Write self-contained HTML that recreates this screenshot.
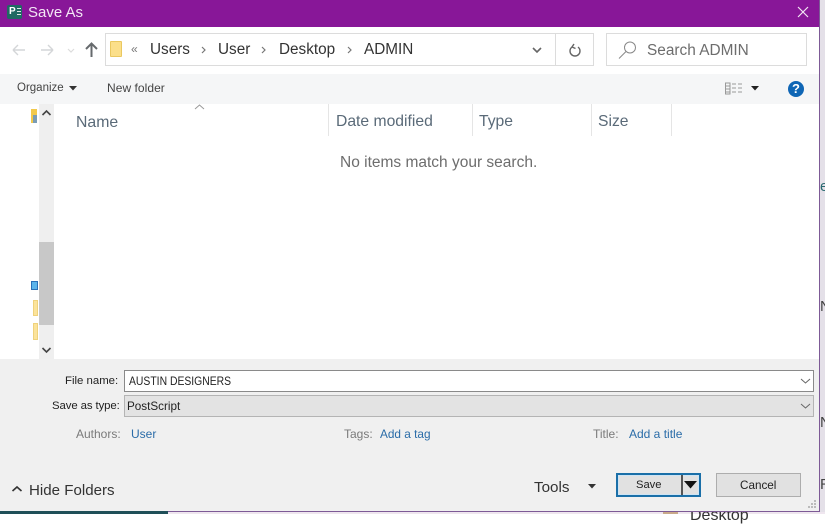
<!DOCTYPE html>
<html><head><meta charset="utf-8"><style>
html,body{margin:0;padding:0}
body{width:825px;height:514px;overflow:hidden;position:relative;background:#fff;font-family:"Liberation Sans",sans-serif}
.a,.t,svg{position:absolute}
.t{white-space:nowrap;line-height:1}
</style></head><body>
<div class="a" style="left:820px;top:0;width:5px;height:514px;background:#e4e0e8"></div>
<div class="t" style="left:820px;top:179px;font-size:15px;color:#2a6a70">e</div>
<div class="t" style="left:820px;top:299px;font-size:15px;color:#444">N</div>
<div class="t" style="left:820px;top:415px;font-size:15px;color:#444">N</div>
<div class="t" style="left:820px;top:477px;font-size:15px;color:#444">R</div>
<div class="a" style="left:0;top:512px;width:825px;height:2px;background:#efe6ef"></div>
<div class="a" style="left:663px;top:511px;width:15px;height:3px;background:#c9a98a"></div>
<div class="t" style="left:690px;top:508px;font-size:16px;color:#333">Desktop</div>
<!-- dialog -->
<div class="a" style="left:0;top:0;width:819px;height:511px;background:#fff;border-right:1px solid #7d5a96;border-bottom:1px solid #7d5a96;overflow:hidden">
<div class="a" style="left:0;top:0;width:819px;height:27px;background:#881798"></div>
<div class="a" style="left:7px;top:5px;width:15px;height:14px;background:#1f6a63;border-radius:2px"></div>
<div class="t" style="left:9px;top:7px;font-size:10px;font-weight:bold;color:#fff">P</div>
<svg style="left:16px;top:7px" width="6" height="10" fill="none" stroke="#dbe9e7"><path d="M1 1.500H5M1 4.500H5M1 7.500H5"/></svg>
<div class="t" style="left:28px;top:5px;font-size:15px;color:#f3e6f5">Save As</div>
<svg style="left:796px;top:5px" width="14" height="14"><path d="M2 2L12 12M12 2L2 12" stroke="#f2e6f4" stroke-width="1.2" fill="none"/></svg>
<!-- nav -->
<svg style="left:10px;top:42px" width="70" height="16" fill="none"><path d="M3 8H15M3 8L8 3M3 8L8 13" stroke="#d4d6d8" stroke-width="1.4"/><path d="M43 8H31M43 8L38 3M43 8L38 13" stroke="#d4d6d8" stroke-width="1.4"/><path d="M58 7L61 10L64 7" stroke="#dcdcdc" stroke-width="1.2"/></svg>
<svg style="left:84px;top:41px" width="15" height="17" fill="none"><path d="M7.500 16V3M2 8L7.500 2.500L13 8" stroke="#666a6d" stroke-width="2"/></svg>
<div class="a" style="left:105px;top:33px;width:489px;height:33px;box-sizing:border-box;border:1px solid #dcdcdc"></div>
<div class="a" style="left:555px;top:33px;width:1px;height:33px;background:#dcdcdc"></div>
<div class="a" style="left:110px;top:41px;width:12px;height:16px;background:#fbdf8a;border:1px solid #eac860;box-sizing:border-box;border-radius:1px"></div>
<div class="t" style="left:131px;top:43px;font-size:12px;color:#777">«</div>
<div class="t" style="left:150px;top:42px;font-size:15.3px;color:#333">Users</div>
<div class="t" style="left:218px;top:42px;font-size:15.3px;color:#333">User</div>
<div class="t" style="left:279px;top:42px;font-size:15.3px;color:#333">Desktop</div>
<div class="t" style="left:364px;top:42px;font-size:15.3px;color:#333">ADMIN</div>
<svg style="left:196px;top:44px" width="170" height="12" fill="none" stroke="#777" stroke-width="1.2"><path d="M6 3L9 6L6 9M66 3L69 6L66 9M152 3L155 6L152 9"/></svg>
<svg style="left:531px;top:45px" width="12" height="10" fill="none"><path d="M2 3L6 7L10 3" stroke="#666" stroke-width="1.6"/></svg>
<svg style="left:568px;top:42px" width="14" height="16" fill="none"><path d="M4 5A5 5 0 1 0 10 5M6 2L4 5L7.500 6.500" stroke="#666" stroke-width="1.4"/></svg>
<div class="a" style="left:606px;top:33px;width:201px;height:33px;box-sizing:border-box;border:1px solid #dcdcdc"></div>
<svg style="left:618px;top:40px" width="20" height="20" fill="none" stroke="#888" stroke-width="1"><circle cx="12" cy="7.500" r="5.500"/><path d="M8 11.500L1 18.500"/></svg>
<div class="t" style="left:647px;top:43px;font-size:15.4px;color:#6d6d6d">Search ADMIN</div>
<!-- toolbar -->
<div class="a" style="left:0;top:74px;width:819px;height:30px;background:#f5f6f7"></div>
<div class="t" style="left:17px;top:83px;font-size:11.5px;color:#444">Organize</div>
<svg style="left:69px;top:86px" width="9" height="5"><path d="M0 0H8L4 4.500Z" fill="#333"/></svg>
<div class="t" style="left:107px;top:82px;font-size:12px;letter-spacing:.05px;color:#444">New folder</div>
<svg style="left:725px;top:82px" width="18" height="13" fill="none" stroke="#999"><path d="M.5 1H5V12H.5ZM.5 4H5M.5 7H5M.5 10H5M7 2H11M13 2H17M7 6H11M13 6H17M7 10H11M13 10H17"/></svg>
<svg style="left:751px;top:86px" width="9" height="5"><path d="M0 0H8L4 4.500Z" fill="#222"/></svg>
<div class="a" style="left:788px;top:81px;width:16px;height:16px;border-radius:50%;background:#0f66b5;color:#fff;font-size:13px;font-weight:bold;line-height:16px;text-align:center">?</div>
<!-- sidebar -->
<div class="a" style="left:31px;top:109px;width:6px;height:14px;background:#f2c94c"></div>
<div class="a" style="left:33px;top:115px;width:4px;height:8px;background:#7a9cb4"></div>
<div class="a" style="left:31px;top:281px;width:7px;height:9px;background:#5bb4ea;border:1px solid #2a70b8;box-sizing:border-box"></div>
<div class="a" style="left:33px;top:300px;width:5px;height:16px;background:#fbe39b;border:1px solid #efd27c;box-sizing:border-box"></div>
<div class="a" style="left:33px;top:323px;width:5px;height:17px;background:#fbe39b;border:1px solid #efd27c;box-sizing:border-box"></div>
<div class="a" style="left:39px;top:104px;width:15px;height:255px;background:#efefef"></div>
<div class="a" style="left:39px;top:242px;width:15px;height:83px;background:#c8c8c8"></div>
<svg style="left:41px;top:109px" width="11" height="8" fill="none"><path d="M1.500 6L5.500 2L9.500 6" stroke="#444" stroke-width="1.6"/></svg>
<svg style="left:41px;top:346px" width="11" height="8" fill="none"><path d="M1.500 2L5.500 6L9.500 2" stroke="#444" stroke-width="1.6"/></svg>
<!-- list header -->
<svg style="left:194px;top:104px" width="11" height="6" fill="none"><path d="M1 5L5.500 1L10 5" stroke="#999"/></svg>
<div class="t" style="left:76px;top:115px;font-size:15.8px;color:#5a6a78">Name</div>
<div class="t" style="left:336px;top:114px;font-size:15.7px;color:#5a6a78">Date modified</div>
<div class="t" style="left:479px;top:114px;font-size:15.7px;color:#5a6a78">Type</div>
<div class="t" style="left:598px;top:114px;font-size:15.7px;color:#5a6a78">Size</div>
<div class="a" style="left:328px;top:104px;width:1px;height:32px;background:#e5e5e5"></div>
<div class="a" style="left:472px;top:104px;width:1px;height:32px;background:#e5e5e5"></div>
<div class="a" style="left:591px;top:104px;width:1px;height:32px;background:#e5e5e5"></div>
<div class="a" style="left:671px;top:104px;width:1px;height:32px;background:#e5e5e5"></div>
<div class="t" style="left:340px;top:155px;font-size:15.5px;color:#6d6d6d">No items match your search.</div>
<!-- bottom -->
<div class="a" style="left:0;top:359px;width:819px;height:152px;background:#f0f0f0"></div>
<div class="t" style="left:65px;top:376px;font-size:11.4px;color:#222">File name:</div>
<div class="a" style="left:124px;top:370px;width:690px;height:22px;box-sizing:border-box;background:#fff;border:1px solid #8a8a8a"></div>
<div class="t" style="left:129px;top:375px;font-size:12px;color:#222;transform:scaleX(.865);transform-origin:0 0">AUSTIN DESIGNERS</div>
<svg style="left:800px;top:377px" width="11" height="8" fill="none"><path d="M1 2L5.500 6L10 2" stroke="#666"/></svg>
<div class="t" style="left:52px;top:401px;font-size:11.4px;letter-spacing:-.1px;color:#222">Save as type:</div>
<div class="a" style="left:124px;top:395px;width:690px;height:22px;box-sizing:border-box;background:#e3e3e3;border:1px solid #b4b4b4"></div>
<div class="t" style="left:127px;top:401px;font-size:11.7px;color:#222">PostScript</div>
<svg style="left:800px;top:402px" width="11" height="8" fill="none"><path d="M1 2L5.500 6L10 2" stroke="#666"/></svg>
<div class="t" style="left:76px;top:428px;font-size:12px;color:#7a7a7a">Authors:</div>
<div class="t" style="left:131px;top:428px;font-size:12px;color:#2a6ca8">User</div>
<div class="t" style="left:344px;top:428px;font-size:12px;color:#7a7a7a">Tags:</div>
<div class="t" style="left:380px;top:429px;font-size:11.8px;color:#2a6ca8">Add a tag</div>
<div class="t" style="left:593px;top:428px;font-size:12px;color:#7a7a7a">Title:</div>
<div class="t" style="left:629px;top:428px;font-size:12px;color:#2a6ca8">Add a title</div>
<svg style="left:11px;top:485px" width="12" height="8" fill="none"><path d="M1.500 6L6 2L10.500 6" stroke="#333" stroke-width="1.6"/></svg>
<div class="t" style="left:29px;top:483px;font-size:15.1px;color:#333">Hide Folders</div>
<div class="t" style="left:534px;top:480px;font-size:15.2px;color:#333">Tools</div>
<svg style="left:588px;top:484px" width="9" height="5"><path d="M0 0H8L4 4.500Z" fill="#333"/></svg>
<div class="a" style="left:616px;top:473px;width:85px;height:24px;box-sizing:border-box;background:#e1e1e1;border:2px solid #1a6fa8;box-shadow:inset 0 0 0 1px #cde4f5"></div>
<div class="t" style="left:636px;top:480px;font-size:11.2px;color:#222">Save</div>
<div class="a" style="left:681px;top:475px;width:2px;height:20px;background:#555"></div>
<svg style="left:684px;top:481px" width="14" height="8"><path d="M0 0H13L6.500 7.500Z" fill="#111"/></svg>
<div class="a" style="left:716px;top:473px;width:85px;height:24px;box-sizing:border-box;background:#e1e1e1;border:1px solid #adadad"></div>
<div class="t" style="left:740px;top:480px;font-size:11.7px;color:#222">Cancel</div>
<svg style="left:808px;top:500px" width="9" height="9" fill="#bbb"><path d="M6 0h2v2H6zM3 3h2v2H3zM6 3h2v2H6zM0 6h2v2H0zM3 6h2v2H3zM6 6h2v2H6z"/></svg>
</div>
<div class="a" style="left:0;top:511px;width:168px;height:3px;background:#1f4f58"></div>
</body></html>
